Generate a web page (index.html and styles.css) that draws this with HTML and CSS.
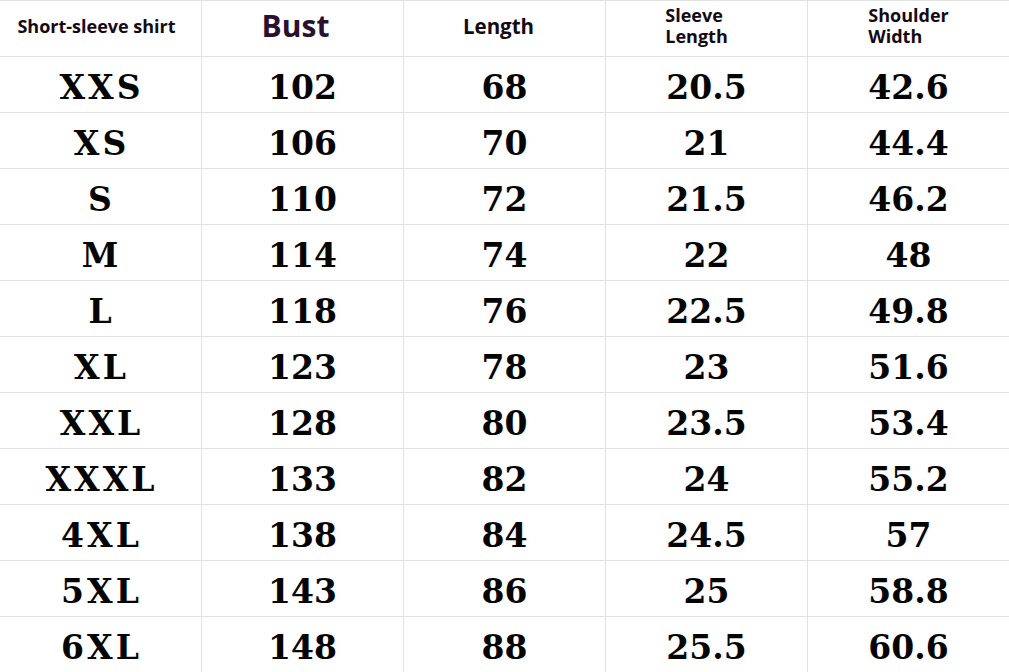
FILE: index.html
```html
<!DOCTYPE html>
<html>
<head>
<meta charset="utf-8">
<link rel="stylesheet" href="styles.css">
</head>
<body>
<div class="table">
  <div class="cell head first"><span>Short-sleeve shirt</span></div>
  <div class="cell head bust"><span>Bust</span></div>
  <div class="cell head len"><span>Length</span></div>
  <div class="cell head two sleeve"><span>Sleeve<br>Length</span></div>
  <div class="cell head two"><span>Shoulder<br>Width</span></div>

  <div class="cell size">XXS</div><div class="cell">102</div><div class="cell">68</div><div class="cell">20.5</div><div class="cell">42.6</div>
  <div class="cell size">XS</div><div class="cell">106</div><div class="cell">70</div><div class="cell">21</div><div class="cell">44.4</div>
  <div class="cell size">S</div><div class="cell">110</div><div class="cell">72</div><div class="cell">21.5</div><div class="cell">46.2</div>
  <div class="cell size">M</div><div class="cell">114</div><div class="cell">74</div><div class="cell">22</div><div class="cell">48</div>
  <div class="cell size">L</div><div class="cell">118</div><div class="cell">76</div><div class="cell">22.5</div><div class="cell">49.8</div>
  <div class="cell size">XL</div><div class="cell">123</div><div class="cell">78</div><div class="cell">23</div><div class="cell">51.6</div>
  <div class="cell size">XXL</div><div class="cell">128</div><div class="cell">80</div><div class="cell">23.5</div><div class="cell">53.4</div>
  <div class="cell size">XXXL</div><div class="cell">133</div><div class="cell">82</div><div class="cell">24</div><div class="cell">55.2</div>
  <div class="cell size">4XL</div><div class="cell">138</div><div class="cell">84</div><div class="cell">24.5</div><div class="cell">57</div>
  <div class="cell size">5XL</div><div class="cell">143</div><div class="cell">86</div><div class="cell">25</div><div class="cell">58.8</div>
  <div class="cell size">6XL</div><div class="cell">148</div><div class="cell">88</div><div class="cell">25.5</div><div class="cell">60.6</div>
</div>
</body>
</html>
```
FILE: styles.css
```css
html, body {
  margin: 0;
  padding: 0;
  background: #ffffff;
}
.table {
  width: 1009px;
  height: 672px;
  box-sizing: border-box;
  padding-top: 1px;
  display: grid;
  grid-template-columns: repeat(5, 1fr);
  grid-template-rows: repeat(12, 55px);
  gap: 1px;
  background: #e2e2e2;
}
.cell {
  background: #ffffff;
  display: flex;
  align-items: center;
  justify-content: center;
  font-family: "DejaVu Serif", "Liberation Serif", serif;
  font-weight: bold;
  font-size: 33px;
  color: #050505;
  padding-top: 5px;
  box-sizing: border-box;
}
.size {
  letter-spacing: 3px;
  padding-left: 2px;
}
.head {
  font-family: "Open Sans", "Noto Sans", sans-serif;
  font-weight: 700;
  font-size: 18px;
  color: #140a14;
  padding-top: 0;
  padding-bottom: 4px;
}
.head span {
  display: block;
  text-align: left;
  line-height: 21px;
}
.first {
  padding-right: 8px;
}
.bust {
  font-size: 30px;
  color: #2a1030;
  padding-right: 14px;
  padding-bottom: 6px;
}
.len {
  font-size: 20.5px;
  padding-right: 12px;
}
.two {
  padding-bottom: 6px;
}
.sleeve span {
  margin-right: 20px;
}
```
